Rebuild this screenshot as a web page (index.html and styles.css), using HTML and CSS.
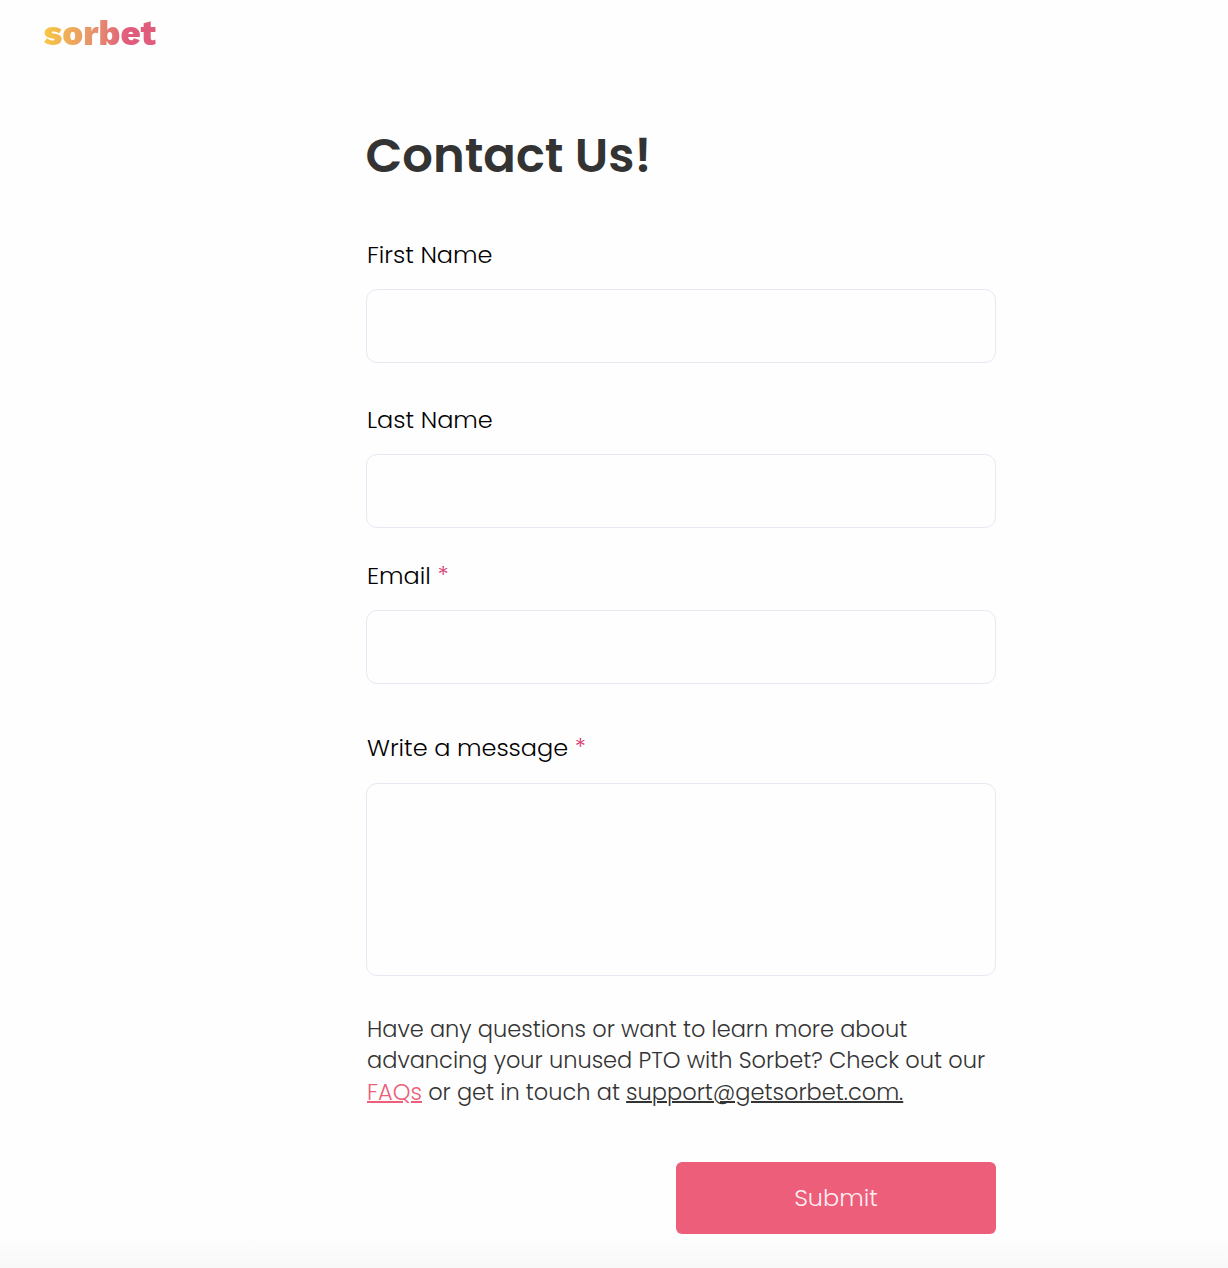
FILE: index.html
```html
<!DOCTYPE html>
<html lang="en">
<head>
    <meta charset="utf-8">
    <title>Sorbet - Contact Us</title>
    <link rel="stylesheet" href="styles.css">
</head>
<body>
    <header class="header">
        <a href="#" class="logo">sorbet</a>
    </header>

    <form class="contact-form">
        <h1>Contact Us!</h1>

        <div class="field">
            <label for="firstName">First Name</label>
            <input type="text" id="firstName">
        </div>

        <div class="field field-last">
            <label for="lastName">Last Name</label>
            <input type="text" id="lastName">
        </div>

        <div class="field field-email">
            <label for="email">Email <span class="required">*</span></label>
            <input type="email" id="email">
        </div>

        <div class="field field-message">
            <label for="message">Write a message <span class="required">*</span></label>
            <textarea id="message"></textarea>
        </div>

        <p class="help">
            Have any questions or want to learn more about<br>
            advancing your unused PTO with Sorbet? Check out our<br>
            <a href="#" class="faq">FAQs</a> or get in touch at <a href="mailto:support@getsorbet.com">support@getsorbet.com.</a>
        </p>

        <button type="submit" class="submit">Submit</button>
    </form>
</body>
</html>
```
FILE: styles.css
```css
* {
    box-sizing: border-box;
}

body {
    margin: 0;
    height: 1268px;
    overflow: hidden;
    background: linear-gradient(#fefefe 1234px, #f8f8f8 1268px) no-repeat #fefefe;
    color: #333;
    font-family: Poppins, Inter, "Noto Sans", sans-serif;
    font-weight: 300;
}

.header {
    height: 68px;
    padding: 13px 43.6px 0;
}

.logo {
    display: inline-block;
    font-family: "Work Sans", Inter, sans-serif;
    font-size: 35px;
    font-weight: 800;
    line-height: 40px;
    text-decoration: none;
    color: transparent;
    background: linear-gradient(100deg, #f7c544 5%, #e8966a 42%, #e05c7c 74%);
    -webkit-background-clip: text;
    background-clip: text;
}

.contact-form {
    display: flex;
    flex-direction: column;
    width: 630px;
    margin: 58px 0 0 366px;
}

h1 {
    margin: 0 0 47px -0.5px;
    font-size: 48px;
    font-weight: 600;
    line-height: 60px;
}

.field {
    display: flex;
    flex-direction: column;
    margin-bottom: 35px;
}

.field-last {
    margin-bottom: 26px;
}

.field-email {
    margin-bottom: 43px;
}

.field-message {
    margin-bottom: 37.6px;
}

label {
    height: 56px;
    padding: 6px 0 0 1px;
    color: #000;
    font-size: 24px;
    line-height: 32px;
}

.field-message label {
    padding-top: 5px;
}

.required {
    line-height: 1;
    vertical-align: 1px;
    color: #d6336c;
}

input,
textarea {
    width: 100%;
    height: 74px;
    border: 1px solid #e8e8f2;
    border-radius: 11px;
    background: #fefefe;
    resize: none;
}

textarea {
    height: 193px;
}

.help {
    margin: 0;
    padding-left: 1px;
    font-size: 22.5px;
    line-height: 31.5px;
    white-space: nowrap;
}

.help a {
    color: inherit;
    text-decoration-thickness: 2px;
}

.help .faq {
    color: #ed5e7a;
}

.submit {
    align-self: flex-end;
    width: 320px;
    height: 72px;
    margin-top: 53.9px;
    border: none;
    border-radius: 6px;
    background: #ed5e7a;
    color: rgba(255, 255, 255, 0.92);
    font: inherit;
    font-size: 24px;
}
```
